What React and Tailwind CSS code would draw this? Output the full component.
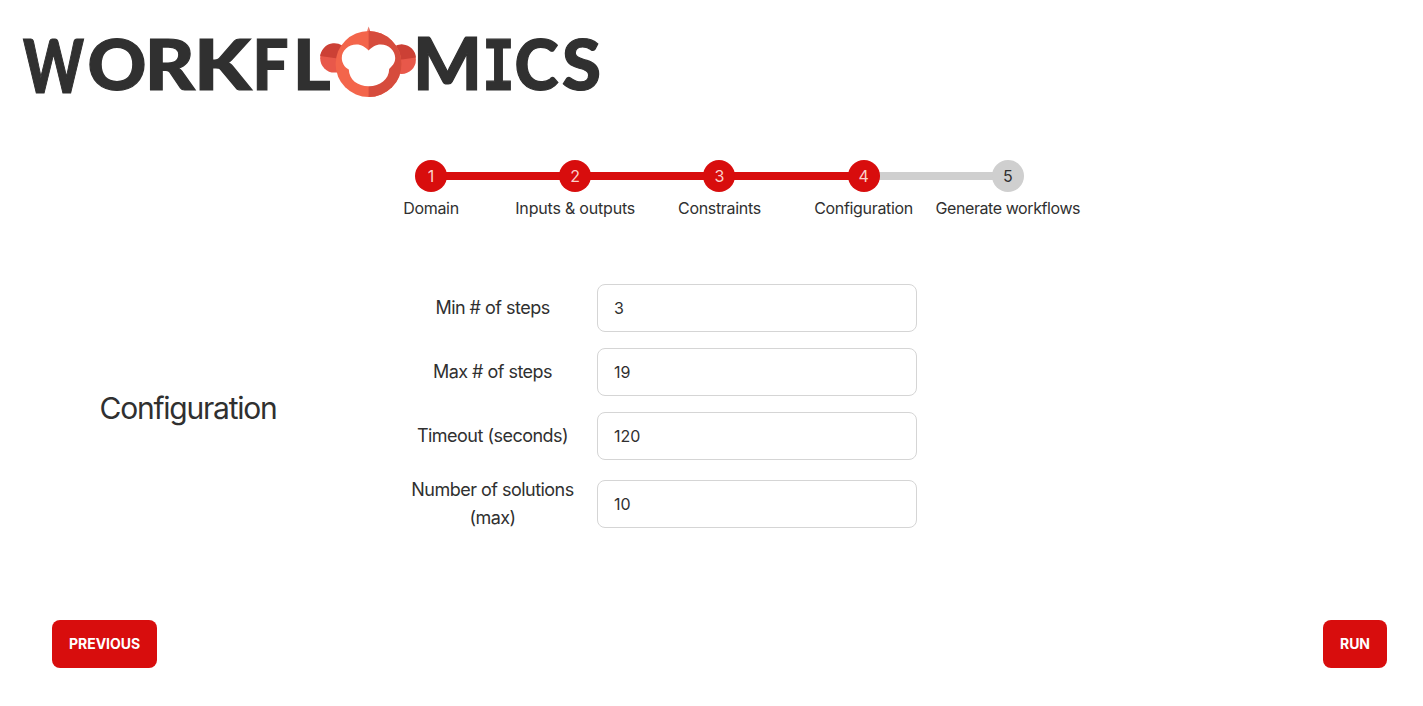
const steps = [
  { label: "Domain", done: true, text: "tracking-[-0.02em]" },
  { label: "Inputs & outputs", done: true, text: "tracking-[-0.012em]" },
  { label: "Constraints", done: true, text: "tracking-[-0.02em]" },
  { label: "Configuration", done: true, text: "tracking-[-0.02em]" },
  { label: "Generate workflows", done: false, text: "tracking-[-0.026em]" },
];

const fields = [
  { label: "Min # of steps", value: "3" },
  { label: "Max # of steps", value: "19" },
  { label: "Timeout (seconds)", value: "120" },
  { label: "Number of solutions (max)", value: "10" },
];

const CONDENSE = 0.75;

// Letters of the wordmark: left edge, baseline and advance width of each one.
const letters = [
  { ch: "W", x: 23, y: 93, w: 61, size: "text-[74px]" },
  { ch: "O", x: 87.5, y: 90, w: 59 },
  { ch: "R", x: 144.8, y: 90, w: 50 },
  { ch: "K", x: 194, y: 90, w: 57 },
  { ch: "F", x: 252.5, y: 90, w: 36 },
  { ch: "L", x: 293, y: 90, w: 37.5 },
  { ch: "M", x: 413, y: 90, w: 69, size: "text-[73px]" },
  { ch: "I", x: 482, y: 90, w: 33, slab: true },
  { ch: "C", x: 514.5, y: 90, w: 44 },
  { ch: "S", x: 562, y: 90, w: 39 },
];

function Logo() {
  return (
    <svg width="620" height="110" viewBox="0 0 620 110" className="block" role="img" aria-label="Workflomics">
      <g fill="#303030" stroke="#303030" strokeWidth="1.2" transform={`scale(${CONDENSE} 1)`}>
        {letters.map((l) => (
          <text
            key={l.ch}
            x={l.x / CONDENSE}
            y={l.y}
            textLength={l.w / CONDENSE}
            lengthAdjust="spacingAndGlyphs"
            className={
              l.slab
                ? "font-['DejaVu_Sans_Mono',monospace] text-[69px] font-bold"
                : `font-['Lato',sans-serif] font-black ${l.size || "text-[70px]"}`
            }
          >
            {l.ch}
          </text>
        ))}
      </g>
      <circle cx="334.5" cy="58.3" r="14.3" fill="#e8584a" />
      <path d="M320.2 56A14.3 14.3 0 0 1 348 53V60Z" fill="#cc4035" />
      <circle cx="401.7" cy="59.8" r="14.2" fill="#e8584a" />
      <path d="M388 55A14.2 14.2 0 0 1 415.9 57.5L388 61.5Z" fill="#cc4035" />
      <circle cx="368.6" cy="64" r="33" fill="#f3654b" />
      <path d="M368.6 31A33 33 0 0 1 368.6 97Z" fill="#d64c3d" />
      <path d="M368.6 26.5Q367.6 29 367 32H368.6Z" fill="#f3654b" />
      <path d="M368.6 26.5Q369.6 29 370.2 32H368.6Z" fill="#d64c3d" />
      <path
        d="M368.6 50.5C365.5 47 361.5 44.4 356.5 44.4C348.3 44.4 341.8 50.5 341.8 58C341.8 62.5 344.5 67.5 348.8 69.5C349 79.5 357.5 86.3 368.8 86.3C380 86.3 389 79.5 389.2 69C391.5 66.5 395.2 63.5 395.2 58C395.2 50.5 388.8 44.4 380.7 44.4C375.8 44.4 371.7 47 368.6 50.5Z"
        fill="#fff"
      />
    </svg>
  );
}

function Steps() {
  return (
    <ol className="grid w-[721px] grid-cols-5">
      {steps.map((s, i) => (
        <li key={s.label} className="flex flex-col items-center">
          <div className="flex h-10 w-full items-center">
            <span className={`h-2 flex-1 ${i === 0 ? "bg-transparent" : s.done ? "bg-[#d80d0d]" : "bg-[#cfcfcf]"}`} />
            <span
              className={`relative z-10 -mx-px flex size-8 shrink-0 items-center justify-center rounded-full text-base ${
                s.done ? "bg-[#d80d0d] text-[#fbd0cb]" : "bg-[#cfcfcf] text-[#303030]"
              }`}
            >
              {i + 1}
            </span>
            <span
              className={`h-2 flex-1 ${
                i === steps.length - 1 ? "bg-transparent" : steps[i + 1].done ? "bg-[#d80d0d]" : "bg-[#cfcfcf]"
              }`}
            />
          </div>
          <span className={`whitespace-nowrap leading-6 ${s.text}`}>{s.label}</span>
        </li>
      ))}
    </ol>
  );
}

function Button({ children }) {
  return (
    <button className="h-12 rounded-lg bg-[#d80d0d] px-[17px] text-sm font-bold tracking-[-0.002em] text-white">
      {children}
    </button>
  );
}

export default function App() {
  return (
    <div className="flex h-[706px] flex-col bg-white font-['Inter',sans-serif] text-base text-[#303030]">
      <header className="h-[156px]">
        <Logo />
      </header>
      <main className="flex flex-1 flex-col pl-4">
        <div className="flex justify-center pr-[0.2px]">
          <Steps />
        </div>
        <section className="mt-16 flex items-center">
          <h1 className="w-[344px] text-center text-3xl tracking-[-0.041em]">Configuration</h1>
          <div className="ml-[44px] flex flex-col gap-4">
            {fields.map((f) => (
              <label key={f.label} className="flex items-center gap-4">
                <span className="w-[177px] text-center text-lg tracking-[-0.029em]">{f.label}</span>
                <input
                  defaultValue={f.value}
                  className="h-12 w-80 rounded-lg border border-[#d5d5d5] bg-white px-4 text-base"
                />
              </label>
            ))}
          </div>
        </section>
        <footer className="mt-auto flex justify-between px-9 pb-[38px]">
          <Button>PREVIOUS</Button>
          <Button>RUN</Button>
        </footer>
      </main>
    </div>
  );
}
